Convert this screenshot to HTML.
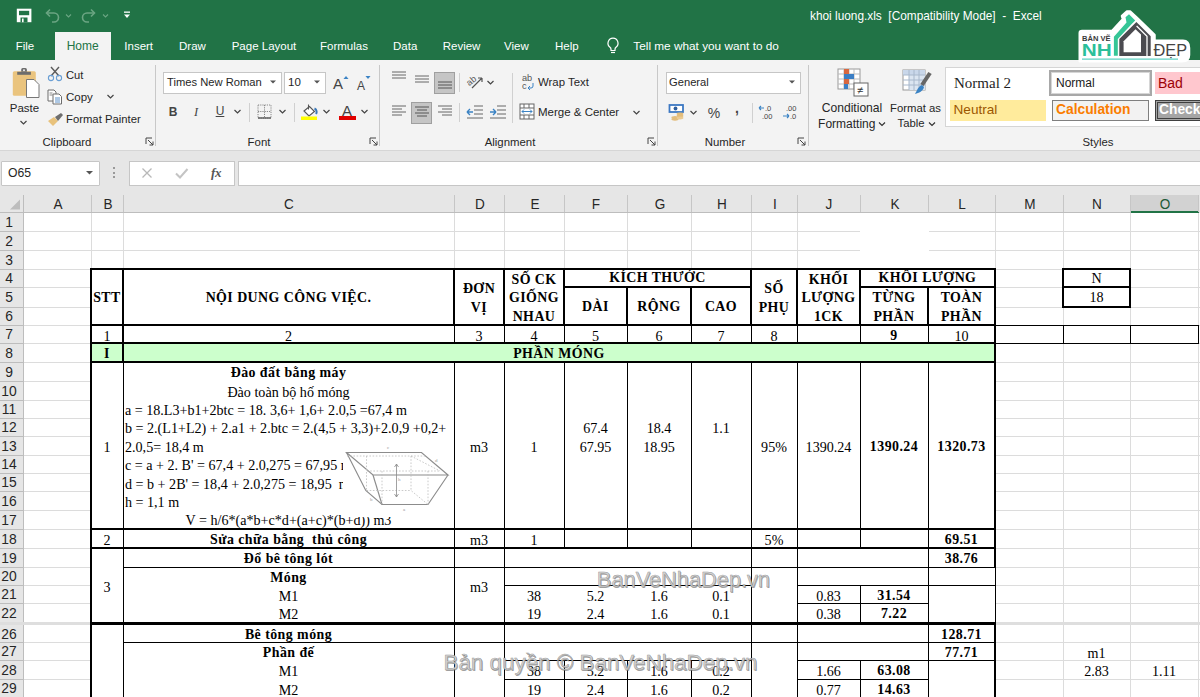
<!DOCTYPE html><html><head><meta charset="utf-8"><style>html,body{margin:0;padding:0;width:1200px;height:697px;overflow:hidden;background:#fff;position:relative;font-family:"Liberation Sans",sans-serif}</style></head><body>
<div style="position:absolute;left:0px;top:0px;width:1200px;height:60px;background:#217346;"></div>
<div style="position:absolute;left:55px;top:32px;width:56px;height:28px;background:#f3f3f3;"></div>
<svg style="position:absolute;left:16px;top:8px;" width="16" height="15" viewBox="0 0 16 15"><rect x="0.8" y="0.7" width="14.6" height="13.5" fill="#fff"/><rect x="3" y="2.8" width="10.2" height="4.4" fill="#217346"/><rect x="4.5" y="9.5" width="7" height="4.7" fill="#217346"/><rect x="6" y="10.5" width="1.6" height="3.7" fill="#fff"/></svg>
<svg style="position:absolute;left:44px;top:8px;" width="30" height="16" viewBox="0 0 30 16"><path d="M3 5h7a4.5 4.5 0 0 1 0 9h-2" fill="none" stroke="#6ba583" stroke-width="1.6"/><path d="M6 1.5L2.5 5 6 8.5" fill="none" stroke="#6ba583" stroke-width="1.6"/><path d="M22 6.5l2.5 2.5 2.5-2.5" fill="none" stroke="#6ba583" stroke-width="1.1"/></svg>
<svg style="position:absolute;left:81px;top:8px;" width="30" height="16" viewBox="0 0 30 16"><path d="M13 5H6a4.5 4.5 0 0 0 0 9h2" fill="none" stroke="#6ba583" stroke-width="1.6"/><path d="M10 1.5L13.5 5 10 8.5" fill="none" stroke="#6ba583" stroke-width="1.6"/><path d="M22 6.5l2.5 2.5 2.5-2.5" fill="none" stroke="#6ba583" stroke-width="1.1"/></svg>
<svg style="position:absolute;left:122px;top:10px;" width="10" height="10" viewBox="0 0 10 10"><rect x="2" y="1.5" width="6" height="1.3" fill="#fff"/><path d="M2 4.5h6L5 8z" fill="#fff"/></svg>
<div style="position:absolute;left:810px;top:8.50px;height:15px;line-height:15px;white-space:pre;font-family:'Liberation Sans', sans-serif;font-size:11.85px;font-weight:normal;color:#ffffff;">khoi luong.xls  [Compatibility Mode]  -  Excel</div>
<div style="position:absolute;left:15.7px;top:38.50px;height:15px;line-height:15px;white-space:pre;font-family:'Liberation Sans', sans-serif;font-size:11.5px;font-weight:normal;color:#ffffff;">File</div>
<div style="position:absolute;left:66.7px;top:38.00px;height:16px;line-height:16px;white-space:pre;font-family:'Liberation Sans', sans-serif;font-size:12px;font-weight:normal;color:#217346;">Home</div>
<div style="position:absolute;left:124.3px;top:38.50px;height:15px;line-height:15px;white-space:pre;font-family:'Liberation Sans', sans-serif;font-size:11.5px;font-weight:normal;color:#ffffff;">Insert</div>
<div style="position:absolute;left:179px;top:38.50px;height:15px;line-height:15px;white-space:pre;font-family:'Liberation Sans', sans-serif;font-size:11.5px;font-weight:normal;color:#ffffff;">Draw</div>
<div style="position:absolute;left:231.7px;top:38.50px;height:15px;line-height:15px;white-space:pre;font-family:'Liberation Sans', sans-serif;font-size:11.5px;font-weight:normal;color:#ffffff;">Page Layout</div>
<div style="position:absolute;left:320px;top:38.50px;height:15px;line-height:15px;white-space:pre;font-family:'Liberation Sans', sans-serif;font-size:11.5px;font-weight:normal;color:#ffffff;">Formulas</div>
<div style="position:absolute;left:393px;top:38.50px;height:15px;line-height:15px;white-space:pre;font-family:'Liberation Sans', sans-serif;font-size:11.5px;font-weight:normal;color:#ffffff;">Data</div>
<div style="position:absolute;left:442.7px;top:38.50px;height:15px;line-height:15px;white-space:pre;font-family:'Liberation Sans', sans-serif;font-size:11.5px;font-weight:normal;color:#ffffff;">Review</div>
<div style="position:absolute;left:504px;top:38.50px;height:15px;line-height:15px;white-space:pre;font-family:'Liberation Sans', sans-serif;font-size:11.5px;font-weight:normal;color:#ffffff;">View</div>
<div style="position:absolute;left:555px;top:38.50px;height:15px;line-height:15px;white-space:pre;font-family:'Liberation Sans', sans-serif;font-size:11.5px;font-weight:normal;color:#ffffff;">Help</div>
<svg style="position:absolute;left:606px;top:37px;" width="14" height="17" viewBox="0 0 14 17"><path d="M7 1.2a5 5 0 0 0-3 9c.6.5 1 1.2 1 2v1.3h4v-1.3c0-.8.4-1.5 1-2a5 5 0 0 0-3-9z" fill="none" stroke="#fff" stroke-width="1.2"/><path d="M5 15.5h4" stroke="#fff" stroke-width="1.2"/></svg>
<div style="position:absolute;left:633.3px;top:39.00px;height:15px;line-height:15px;white-space:pre;font-family:'Liberation Sans', sans-serif;font-size:11.8px;font-weight:normal;color:#ffffff;">Tell me what you want to do</div>
<div style="position:absolute;left:0px;top:60px;width:1200px;height:90px;background:#f3f3f3;"></div>
<div style="position:absolute;left:0px;top:150px;width:1200px;height:1px;background:#d6d6d6;"></div>
<div style="position:absolute;left:155px;top:65px;width:1px;height:81px;background:#c8c8c8;"></div>
<div style="position:absolute;left:379px;top:65px;width:1px;height:81px;background:#c8c8c8;"></div>
<div style="position:absolute;left:657px;top:65px;width:1px;height:81px;background:#c8c8c8;"></div>
<div style="position:absolute;left:808px;top:65px;width:1px;height:81px;background:#c8c8c8;"></div>
<div style="position:absolute;left:-233px;width:600px;text-align:center;top:134.50px;height:15px;line-height:15px;white-space:pre;font-family:'Liberation Sans', sans-serif;font-size:11.4px;font-weight:normal;color:#262626;">Clipboard</div>
<div style="position:absolute;left:-41px;width:600px;text-align:center;top:134.50px;height:15px;line-height:15px;white-space:pre;font-family:'Liberation Sans', sans-serif;font-size:11.4px;font-weight:normal;color:#262626;">Font</div>
<div style="position:absolute;left:210px;width:600px;text-align:center;top:134.50px;height:15px;line-height:15px;white-space:pre;font-family:'Liberation Sans', sans-serif;font-size:11.4px;font-weight:normal;color:#262626;">Alignment</div>
<div style="position:absolute;left:425px;width:600px;text-align:center;top:134.50px;height:15px;line-height:15px;white-space:pre;font-family:'Liberation Sans', sans-serif;font-size:11.4px;font-weight:normal;color:#262626;">Number</div>
<div style="position:absolute;left:798px;width:600px;text-align:center;top:134.50px;height:15px;line-height:15px;white-space:pre;font-family:'Liberation Sans', sans-serif;font-size:11.4px;font-weight:normal;color:#262626;">Styles</div>
<svg style="position:absolute;left:145px;top:137px;" width="10" height="10" viewBox="0 0 10 10"><path d="M1 1h6M1 1v6" stroke="#444" stroke-width="1"/><path d="M3 3l5 5M8 4.5v3.5h-3.5" fill="none" stroke="#444" stroke-width="1"/></svg>
<svg style="position:absolute;left:369px;top:137px;" width="10" height="10" viewBox="0 0 10 10"><path d="M1 1h6M1 1v6" stroke="#444" stroke-width="1"/><path d="M3 3l5 5M8 4.5v3.5h-3.5" fill="none" stroke="#444" stroke-width="1"/></svg>
<svg style="position:absolute;left:647px;top:137px;" width="10" height="10" viewBox="0 0 10 10"><path d="M1 1h6M1 1v6" stroke="#444" stroke-width="1"/><path d="M3 3l5 5M8 4.5v3.5h-3.5" fill="none" stroke="#444" stroke-width="1"/></svg>
<svg style="position:absolute;left:797px;top:137px;" width="10" height="10" viewBox="0 0 10 10"><path d="M1 1h6M1 1v6" stroke="#444" stroke-width="1"/><path d="M3 3l5 5M8 4.5v3.5h-3.5" fill="none" stroke="#444" stroke-width="1"/></svg>
<svg style="position:absolute;left:11px;top:67px;" width="30" height="32" viewBox="0 0 30 32"><rect x="1.8" y="4.3" width="23" height="24.4" rx="1.5" fill="#eac47e"/><rect x="6.2" y="4.8" width="13.7" height="3" fill="#6d6d6d"/><path d="M10.2 4.8v-2.2a1.5 1.5 0 0 1 1.5-1.5h2.7a1.5 1.5 0 0 1 1.5 1.5v2.2z" fill="#6d6d6d"/><circle cx="13" cy="3.2" r="1" fill="#f3f3f3"/><path d="M15.5 12.5h7.5l5 5v13h-12.5z" fill="#fff" stroke="#777" stroke-width="1"/></svg>
<div style="position:absolute;left:-275.5px;width:600px;text-align:center;top:100.50px;height:15px;line-height:15px;white-space:pre;font-family:'Liberation Sans', sans-serif;font-size:11.5px;font-weight:normal;color:#262626;">Paste</div>
<svg style="position:absolute;left:19px;top:119px;" width="10" height="8" viewBox="0 0 10 8"><path d="M1.5 2l3 3 3-3" fill="none" stroke="#444" stroke-width="1.2"/></svg>
<svg style="position:absolute;left:47px;top:66px;" width="16" height="16" viewBox="0 0 16 16"><path d="M4 1l8 9M12 1L4 10" stroke="#5a5a5a" stroke-width="1.4"/><circle cx="4" cy="12" r="2.6" fill="none" stroke="#6a9fd4" stroke-width="1.1"/><circle cx="12" cy="12" r="2.6" fill="none" stroke="#6a9fd4" stroke-width="1.1"/></svg>
<div style="position:absolute;left:66px;top:67.50px;height:15px;line-height:15px;white-space:pre;font-family:'Liberation Sans', sans-serif;font-size:11.2px;font-weight:normal;color:#262626;">Cut</div>
<svg style="position:absolute;left:47px;top:89px;" width="16" height="17" viewBox="0 0 16 17"><path d="M1 1h6l2 2v9H1z" fill="#fff" stroke="#6d6d6d" stroke-width="1"/><path d="M6 5h6l2.5 2.5V15H6z" fill="#fff" stroke="#6d6d6d" stroke-width="1"/><path d="M8 9h5M8 11h5M8 13h5" stroke="#4a86c5" stroke-width="0.9"/><path d="M2.5 4h3M2.5 6h3" stroke="#6d6d6d" stroke-width="0.8"/></svg>
<div style="position:absolute;left:66px;top:90.00px;height:15px;line-height:15px;white-space:pre;font-family:'Liberation Sans', sans-serif;font-size:11.5px;font-weight:normal;color:#262626;">Copy</div>
<svg style="position:absolute;left:106px;top:93px;" width="10" height="8" viewBox="0 0 10 8"><path d="M1.5 2l3 3 3-3" fill="none" stroke="#444" stroke-width="1.2"/></svg>
<svg style="position:absolute;left:47px;top:112px;" width="17" height="15" viewBox="0 0 17 15"><path d="M1 9l6-4 4 4-5 5z" fill="#e8c27c"/><path d="M8 5l6-4 2 2-5 6z" fill="#6d6d6d"/></svg>
<div style="position:absolute;left:66px;top:112.00px;height:15px;line-height:15px;white-space:pre;font-family:'Liberation Sans', sans-serif;font-size:11.3px;font-weight:normal;color:#262626;">Format Painter</div>
<div style="position:absolute;left:163px;top:71.5px;width:119px;height:22px;box-sizing:border-box;border:1px solid #c6c6c6;background:#fff;"></div>
<div style="position:absolute;left:167px;top:75.00px;height:15px;line-height:15px;white-space:pre;font-family:'Liberation Sans', sans-serif;font-size:11.2px;font-weight:normal;color:#262626;">Times New Roman</div>
<svg style="position:absolute;left:269px;top:79px;" width="9" height="6" viewBox="0 0 9 6"><path d="M1 1.5h6l-3 3z" fill="#555"/></svg>
<div style="position:absolute;left:284px;top:71.5px;width:42px;height:22px;box-sizing:border-box;border:1px solid #c6c6c6;background:#fff;"></div>
<div style="position:absolute;left:288px;top:75.00px;height:15px;line-height:15px;white-space:pre;font-family:'Liberation Sans', sans-serif;font-size:11.5px;font-weight:normal;color:#262626;">10</div>
<svg style="position:absolute;left:313px;top:79px;" width="9" height="6" viewBox="0 0 9 6"><path d="M1 1.5h6l-3 3z" fill="#555"/></svg>
<div style="position:absolute;left:333px;top:74.00px;height:20px;line-height:20px;white-space:pre;font-family:'Liberation Sans', sans-serif;font-size:15px;font-weight:normal;color:#444;">A</div>
<svg style="position:absolute;left:343px;top:75px;" width="6" height="5" viewBox="0 0 6 5"><path d="M0.5 4L3 1l2.5 3z" fill="#3b83c4"/></svg>
<div style="position:absolute;left:357px;top:78.00px;height:16px;line-height:16px;white-space:pre;font-family:'Liberation Sans', sans-serif;font-size:12px;font-weight:normal;color:#444;">A</div>
<svg style="position:absolute;left:365px;top:75px;" width="6" height="5" viewBox="0 0 6 5"><path d="M0.5 1L3 4l2.5-3z" fill="#3b83c4"/></svg>
<div style="position:absolute;left:-127px;width:600px;text-align:center;top:104.00px;height:16px;line-height:16px;white-space:pre;font-family:'Liberation Sans', sans-serif;font-size:12px;font-weight:bold;color:#444;">B</div>
<div style="position:absolute;left:-104px;width:600px;text-align:center;top:104.00px;height:16px;line-height:16px;white-space:pre;font-family:'Liberation Serif', serif;font-size:12.5px;font-weight:normal;color:#444;font-style:italic;">I</div>
<div style="position:absolute;left:-80px;width:600px;text-align:center;top:103.00px;height:16px;line-height:16px;white-space:pre;font-family:'Liberation Sans', sans-serif;font-size:12px;font-weight:normal;color:#444;text-decoration:underline;">U</div>
<svg style="position:absolute;left:233px;top:108px;" width="10" height="8" viewBox="0 0 10 8"><path d="M1.5 2l3 3 3-3" fill="none" stroke="#444" stroke-width="1.2"/></svg>
<div style="position:absolute;left:249px;top:103px;width:1px;height:19px;background:#d0d0d0;"></div>
<svg style="position:absolute;left:257px;top:104px;" width="15" height="15" viewBox="0 0 15 15"><path d="M1 1h13v13H1zM7.5 1v13M1 7.5h13" fill="none" stroke="#888" stroke-width="1" stroke-dasharray="1.2 1"/><path d="M1 14h13" stroke="#444" stroke-width="1.2"/></svg>
<svg style="position:absolute;left:278px;top:108px;" width="10" height="8" viewBox="0 0 10 8"><path d="M1.5 2l3 3 3-3" fill="none" stroke="#444" stroke-width="1.2"/></svg>
<div style="position:absolute;left:294px;top:103px;width:1px;height:19px;background:#d0d0d0;"></div>
<svg style="position:absolute;left:300px;top:103px;" width="19" height="19" viewBox="0 0 19 19"><path d="M4 8l5.5-4.5 5 5-5.5 4.5z" fill="#fff" stroke="#555" stroke-width="1.1"/><path d="M8.5 1.5v5" stroke="#555" stroke-width="1.1"/><path d="M14.5 5.5c2.5 1 2.5 4 1.5 5.5" fill="none" stroke="#3b78b8" stroke-width="2"/><rect x="1" y="13.5" width="16" height="3.5" fill="#ffff00"/></svg>
<svg style="position:absolute;left:322px;top:108px;" width="10" height="8" viewBox="0 0 10 8"><path d="M1.5 2l3 3 3-3" fill="none" stroke="#444" stroke-width="1.2"/></svg>
<div style="position:absolute;left:47px;width:600px;text-align:center;top:101.00px;height:20px;line-height:20px;white-space:pre;font-family:'Liberation Sans', sans-serif;font-size:15px;font-weight:normal;color:#444;">A</div>
<div style="position:absolute;left:339px;top:116.3px;width:16.5px;height:3.5px;background:#e00000;"></div>
<svg style="position:absolute;left:360px;top:108px;" width="10" height="8" viewBox="0 0 10 8"><path d="M1.5 2l3 3 3-3" fill="none" stroke="#444" stroke-width="1.2"/></svg>
<svg style="position:absolute;left:391px;top:71px;" width="16" height="12" viewBox="0 0 16 12"><path d="M1 1h14" stroke="#666" stroke-width="1"/><path d="M1 4h14" stroke="#666" stroke-width="1"/><path d="M1 7h14" stroke="#666" stroke-width="1"/></svg>
<svg style="position:absolute;left:414px;top:75px;" width="16" height="12" viewBox="0 0 16 12"><path d="M1 1h14" stroke="#666" stroke-width="1"/><path d="M1 4h14" stroke="#666" stroke-width="1"/><path d="M1 7h14" stroke="#666" stroke-width="1"/></svg>
<div style="position:absolute;left:434px;top:71.5px;width:21px;height:22px;box-sizing:border-box;border:1px solid #9f9f9f;background:#c5c5c5;"></div>
<svg style="position:absolute;left:437px;top:81px;" width="16" height="12" viewBox="0 0 16 12"><path d="M1 1h14" stroke="#555" stroke-width="1"/><path d="M1 4h14" stroke="#555" stroke-width="1"/><path d="M1 7h14" stroke="#555" stroke-width="1"/></svg>
<div style="position:absolute;left:459px;top:73px;width:1px;height:19px;background:#d0d0d0;"></div>
<svg style="position:absolute;left:465px;top:72px;" width="20" height="20" viewBox="0 0 20 20"><text x="1" y="11" font-size="9" font-family="Liberation Sans" fill="#555" transform="rotate(-40 7 8)">ab</text><path d="M7 16L17 6M17 6h-4M17 6v4" fill="none" stroke="#555" stroke-width="1.2"/></svg>
<svg style="position:absolute;left:486px;top:79px;" width="10" height="8" viewBox="0 0 10 8"><path d="M1.5 2l3 3 3-3" fill="none" stroke="#444" stroke-width="1.2"/></svg>
<div style="position:absolute;left:512px;top:73px;width:1px;height:50px;background:#d0d0d0;"></div>
<div style="position:absolute;left:522px;top:72.00px;height:12px;line-height:12px;white-space:pre;font-family:'Liberation Sans', sans-serif;font-size:9.2px;font-weight:normal;color:#555;">ab</div>
<div style="position:absolute;left:522px;top:79.50px;height:12px;line-height:12px;white-space:pre;font-family:'Liberation Sans', sans-serif;font-size:9.2px;font-weight:normal;color:#555;">c</div>
<svg style="position:absolute;left:527px;top:82px;" width="8" height="8" viewBox="0 0 8 8"><path d="M6 1v3a2 2 0 0 1-2 2H1M3 4L1 6l2 2" fill="none" stroke="#3b83c4" stroke-width="1"/></svg>
<div style="position:absolute;left:538px;top:75.00px;height:15px;line-height:15px;white-space:pre;font-family:'Liberation Sans', sans-serif;font-size:11.4px;font-weight:normal;color:#262626;">Wrap Text</div>
<svg style="position:absolute;left:391px;top:105px;" width="16" height="14" viewBox="0 0 16 14"><path d="M1 1h14" stroke="#666" stroke-width="1"/><path d="M1 4h10" stroke="#666" stroke-width="1"/><path d="M1 7h14" stroke="#666" stroke-width="1"/><path d="M1 10h10" stroke="#666" stroke-width="1"/></svg>
<div style="position:absolute;left:411px;top:101.5px;width:21px;height:22px;box-sizing:border-box;border:1px solid #9f9f9f;background:#c5c5c5;"></div>
<svg style="position:absolute;left:414px;top:106px;" width="16" height="14" viewBox="0 0 16 14"><path d="M1 1h14" stroke="#555" stroke-width="1"/><path d="M3 4h10" stroke="#555" stroke-width="1"/><path d="M1 7h14" stroke="#555" stroke-width="1"/><path d="M3 10h10" stroke="#555" stroke-width="1"/></svg>
<svg style="position:absolute;left:437px;top:105px;" width="16" height="14" viewBox="0 0 16 14"><path d="M1 1h14" stroke="#666" stroke-width="1"/><path d="M5 4h10" stroke="#666" stroke-width="1"/><path d="M1 7h14" stroke="#666" stroke-width="1"/><path d="M5 10h10" stroke="#666" stroke-width="1"/></svg>
<div style="position:absolute;left:459px;top:103px;width:1px;height:19px;background:#d0d0d0;"></div>
<svg style="position:absolute;left:466px;top:104px;" width="18" height="16" viewBox="0 0 18 16"><path d="M8 2h9M8 6h9M8 10h9M1 14h16" stroke="#666" stroke-width="1"/><path d="M1 8h6M1 8l3-3M1 8l3 3" fill="none" stroke="#3b83c4" stroke-width="1.4"/></svg>
<svg style="position:absolute;left:489px;top:104px;" width="18" height="16" viewBox="0 0 18 16"><path d="M8 2h9M8 6h9M8 10h9M1 14h16" stroke="#666" stroke-width="1"/><path d="M1 8h6M7 8l-3-3M7 8l-3 3" fill="none" stroke="#3b83c4" stroke-width="1.4"/></svg>
<svg style="position:absolute;left:519px;top:103px;" width="16" height="17" viewBox="0 0 16 17"><rect x="1" y="1" width="14" height="15" fill="#fff" stroke="#666" stroke-width="1"/><path d="M1 5h14M1 12h14M5 1v4M10 1v4M5 12v4M10 12v4" stroke="#666" stroke-width="1"/><path d="M3 8.5h10M3 8.5l2-2M3 8.5l2 2M13 8.5l-2-2M13 8.5l-2 2" fill="none" stroke="#3b83c4" stroke-width="1"/></svg>
<div style="position:absolute;left:538px;top:105.00px;height:15px;line-height:15px;white-space:pre;font-family:'Liberation Sans', sans-serif;font-size:11.5px;font-weight:normal;color:#262626;">Merge &amp; Center</div>
<svg style="position:absolute;left:632px;top:109px;" width="10" height="8" viewBox="0 0 10 8"><path d="M1.5 2l3 3 3-3" fill="none" stroke="#444" stroke-width="1.2"/></svg>
<div style="position:absolute;left:666px;top:71.5px;width:135px;height:22px;box-sizing:border-box;border:1px solid #c6c6c6;background:#fff;"></div>
<div style="position:absolute;left:669px;top:75.00px;height:15px;line-height:15px;white-space:pre;font-family:'Liberation Sans', sans-serif;font-size:11.2px;font-weight:normal;color:#262626;">General</div>
<svg style="position:absolute;left:788px;top:79px;" width="9" height="6" viewBox="0 0 9 6"><path d="M1 1.5h6l-3 3z" fill="#555"/></svg>
<svg style="position:absolute;left:667px;top:103px;" width="19" height="18" viewBox="0 0 19 18"><rect x="2.5" y="2" width="13.5" height="7" fill="#fff" stroke="#3c78c3" stroke-width="1.8"/><circle cx="8.5" cy="5.5" r="1.9" fill="#2f5f9e"/><ellipse cx="8" cy="14.5" rx="3.6" ry="1.5" fill="#e3bd7c"/><ellipse cx="8" cy="16.3" rx="3.6" ry="1.4" fill="#e3bd7c"/><ellipse cx="13" cy="11" rx="3.4" ry="1.4" fill="#e3bd7c"/><ellipse cx="13" cy="13" rx="3.4" ry="1.4" fill="#e3bd7c"/><ellipse cx="13" cy="15" rx="3.4" ry="1.4" fill="#eccb92"/></svg>
<svg style="position:absolute;left:689px;top:109px;" width="10" height="8" viewBox="0 0 10 8"><path d="M1.5 2l3 3 3-3" fill="none" stroke="#444" stroke-width="1.2"/></svg>
<div style="position:absolute;left:414px;width:600px;text-align:center;top:103.50px;height:18px;line-height:18px;white-space:pre;font-family:'Liberation Sans', sans-serif;font-size:14px;font-weight:normal;color:#444;">%</div>
<div style="position:absolute;left:437px;width:600px;text-align:center;top:98.50px;height:18px;line-height:18px;white-space:pre;font-family:'Liberation Sans', sans-serif;font-size:14px;font-weight:bold;color:#444;">,</div>
<div style="position:absolute;left:752px;top:103px;width:1px;height:20px;background:#d0d0d0;"></div>
<svg style="position:absolute;left:758px;top:104px;" width="17" height="16" viewBox="0 0 17 16"><path d="M6 4H1M1 4l2-2M1 4l2 2" fill="none" stroke="#3b83c4" stroke-width="1.1"/><text x="7" y="7" font-size="7.5" font-family="Liberation Sans" fill="#444">.0</text><text x="4" y="15" font-size="7.5" font-family="Liberation Sans" fill="#444">.00</text></svg>
<svg style="position:absolute;left:782px;top:104px;" width="17" height="16" viewBox="0 0 17 16"><text x="4" y="7" font-size="7.5" font-family="Liberation Sans" fill="#444">.00</text><path d="M1 12h6M7 12l-2-2M7 12l-2 2" fill="none" stroke="#3b83c4" stroke-width="1.1"/><text x="8" y="15" font-size="7.5" font-family="Liberation Sans" fill="#444">.0</text></svg>
<svg style="position:absolute;left:837px;top:68px;" width="32" height="30" viewBox="0 0 32 30"><rect x="1" y="1" width="22" height="20" fill="#fff" stroke="#999" stroke-width="1"/><path d="M1 6h22M1 11h22M1 16h22M7 1v20M12 1v20M17 1v20" stroke="#bbb" stroke-width="1"/><rect x="7" y="1" width="5" height="5" fill="#d9673e"/><rect x="7" y="6" width="10" height="5" fill="#3b7ec4"/><rect x="7" y="11" width="5" height="5" fill="#d9673e"/><rect x="7" y="16" width="4" height="5" fill="#3b7ec4"/><rect x="17" y="15" width="14" height="13" fill="#fff" stroke="#666" stroke-width="1"/><text x="20" y="26" font-size="11" font-family="Liberation Sans" fill="#333">≠</text></svg>
<div style="position:absolute;left:552px;width:600px;text-align:center;top:100.00px;height:16px;line-height:16px;white-space:pre;font-family:'Liberation Sans', sans-serif;font-size:12.1px;font-weight:normal;color:#262626;">Conditional</div>
<div style="position:absolute;left:546.8px;width:600px;text-align:center;top:115.50px;height:16px;line-height:16px;white-space:pre;font-family:'Liberation Sans', sans-serif;font-size:12.0px;font-weight:normal;color:#262626;">Formatting</div>
<svg style="position:absolute;left:877.5px;top:121px;" width="8" height="6" viewBox="0 0 8 6"><path d="M1 1.5l3 3 3-3" fill="none" stroke="#333" stroke-width="1.2"/></svg>
<svg style="position:absolute;left:902px;top:69px;" width="30" height="28" viewBox="0 0 30 28"><rect x="1" y="1" width="22" height="20" fill="#fff" stroke="#999" stroke-width="1"/><rect x="1" y="1" width="22" height="5" fill="#c9d7ea"/><rect x="7" y="6" width="16" height="15" fill="#dbe5f1"/><path d="M1 6h22M1 11h22M1 16h22M7 1v20M12 1v20M17 1v20" stroke="#a8b8cc" stroke-width="1"/><path d="M28 4l-8 12" stroke="#666" stroke-width="4"/><path d="M20 16c-3 1-4 3-7 9c4-1 8-3 9-7z" fill="#3b83c4"/></svg>
<div style="position:absolute;left:615.5px;width:600px;text-align:center;top:100.50px;height:15px;line-height:15px;white-space:pre;font-family:'Liberation Sans', sans-serif;font-size:11.3px;font-weight:normal;color:#262626;">Format as</div>
<div style="position:absolute;left:611px;width:600px;text-align:center;top:116.00px;height:15px;line-height:15px;white-space:pre;font-family:'Liberation Sans', sans-serif;font-size:11.3px;font-weight:normal;color:#262626;">Table</div>
<svg style="position:absolute;left:927.5px;top:121px;" width="8" height="6" viewBox="0 0 8 6"><path d="M1 1.5l3 3 3-3" fill="none" stroke="#333" stroke-width="1.2"/></svg>
<div style="position:absolute;left:945px;top:67px;width:260px;height:60px;box-sizing:border-box;border:1px solid #d5d5d5;background:#ffffff;"></div>
<div style="position:absolute;left:954px;top:73.00px;height:20px;line-height:20px;white-space:pre;font-family:'Liberation Serif', serif;font-size:15px;font-weight:normal;color:#1f1f1f;">Normal 2</div>
<div style="position:absolute;left:1049px;top:70px;width:103px;height:26px;box-sizing:border-box;border:2px solid #a8a8a8;background:#fff;box-shadow:inset 0 0 0 1px #d6d6d6;"></div>
<div style="position:absolute;left:1056px;top:75.00px;height:16px;line-height:16px;white-space:pre;font-family:'Liberation Sans', sans-serif;font-size:12px;font-weight:normal;color:#1a1a1a;">Normal</div>
<div style="position:absolute;left:1155px;top:72px;width:50px;height:22px;background:#ffc7ce;"></div>
<div style="position:absolute;left:1158px;top:74.00px;height:18px;line-height:18px;white-space:pre;font-family:'Liberation Sans', sans-serif;font-size:14px;font-weight:normal;color:#9c0006;">Bad</div>
<div style="position:absolute;left:950px;top:99.5px;width:96px;height:21px;background:#ffeb9c;"></div>
<div style="position:absolute;left:953.5px;top:101.00px;height:18px;line-height:18px;white-space:pre;font-family:'Liberation Sans', sans-serif;font-size:13.6px;font-weight:normal;color:#9c5700;">Neutral</div>
<div style="position:absolute;left:1052px;top:99.5px;width:97px;height:21px;box-sizing:border-box;border:1px solid #7f7f7f;background:#f2f2f2;"></div>
<div style="position:absolute;left:1056px;top:101.00px;height:18px;line-height:18px;white-space:pre;font-family:'Liberation Sans', sans-serif;font-size:13.8px;font-weight:bold;color:#fa7d00;">Calculation</div>
<div style="position:absolute;left:1155px;top:99.5px;width:50px;height:21px;box-sizing:border-box;border:3px double #3f3f3f;background:#a5a5a5;"></div>
<div style="position:absolute;left:1159px;top:101.00px;height:18px;line-height:18px;white-space:pre;font-family:'Liberation Sans', sans-serif;font-size:13.8px;font-weight:bold;color:#ffffff;">Check</div>
<div style="position:absolute;left:0px;top:151px;width:1200px;height:62px;background:#e6e6e6;"></div>
<div style="position:absolute;left:1px;top:160.5px;width:99px;height:25px;box-sizing:border-box;border:1px solid #c6c6c6;background:#fff;border-radius:1px;"></div>
<div style="position:absolute;left:8px;top:165.00px;height:16px;line-height:16px;white-space:pre;font-family:'Liberation Sans', sans-serif;font-size:12.2px;font-weight:normal;color:#262626;">O65</div>
<svg style="position:absolute;left:85px;top:170px;" width="10" height="6" viewBox="0 0 10 6"><path d="M1 1h7l-3.5 3.5z" fill="#555"/></svg>
<div style="position:absolute;left:113px;top:167px;width:2px;height:2px;background:#999;"></div>
<div style="position:absolute;left:113px;top:171.5px;width:2px;height:2px;background:#999;"></div>
<div style="position:absolute;left:113px;top:176px;width:2px;height:2px;background:#999;"></div>
<div style="position:absolute;left:129px;top:160.5px;width:106px;height:25px;box-sizing:border-box;border:1px solid #c6c6c6;background:#fff;"></div>
<svg style="position:absolute;left:141px;top:167px;" width="12" height="12" viewBox="0 0 12 12"><path d="M1.5 1.5l9 9M10.5 1.5l-9 9" stroke="#b8b8b8" stroke-width="1.3"/></svg>
<svg style="position:absolute;left:175px;top:167px;" width="14" height="12" viewBox="0 0 14 12"><path d="M1 6.5l4 4 7.5-8.5" fill="none" stroke="#c4c4c4" stroke-width="2"/></svg>
<div style="position:absolute;left:-84px;width:600px;text-align:center;top:164.00px;height:17px;line-height:17px;white-space:pre;font-family:'Liberation Serif', serif;font-size:13px;font-weight:bold;color:#555;font-style:italic;letter-spacing:-0.5px;">fx</div>
<div style="position:absolute;left:238px;top:160.5px;width:970px;height:25px;box-sizing:border-box;border:1px solid #c6c6c6;background:#fff;"></div>
<div style="position:absolute;left:0px;top:213px;width:23px;height:484px;background:#e6e6e6;"></div>
<div style="position:absolute;left:24px;top:214px;width:1176px;height:483px;background:#ffffff;"></div>
<div style="position:absolute;left:1131px;top:195px;width:68px;height:18px;background:#d2d2d2;"></div>
<div style="position:absolute;left:1131px;top:211px;width:68px;height:2px;background:#217346;"></div>
<svg style="position:absolute;left:9px;top:198px;" width="13" height="13" viewBox="0 0 13 13"><path d="M11 1.5v10H1z" fill="#bdbdbd"/></svg>
<div style="position:absolute;left:0px;top:212px;width:1131px;height:1px;background:#bdbdbd;"></div>
<div style="position:absolute;left:23px;top:195px;width:1px;height:502px;background:#bdbdbd;"></div>
<div style="position:absolute;left:91px;top:195px;width:1px;height:17px;background:#c6c6c6;"></div>
<div style="position:absolute;left:123px;top:195px;width:1px;height:17px;background:#c6c6c6;"></div>
<div style="position:absolute;left:454px;top:195px;width:1px;height:17px;background:#c6c6c6;"></div>
<div style="position:absolute;left:504px;top:195px;width:1px;height:17px;background:#c6c6c6;"></div>
<div style="position:absolute;left:564px;top:195px;width:1px;height:17px;background:#c6c6c6;"></div>
<div style="position:absolute;left:627px;top:195px;width:1px;height:17px;background:#c6c6c6;"></div>
<div style="position:absolute;left:691px;top:195px;width:1px;height:17px;background:#c6c6c6;"></div>
<div style="position:absolute;left:751px;top:195px;width:1px;height:17px;background:#c6c6c6;"></div>
<div style="position:absolute;left:797px;top:195px;width:1px;height:17px;background:#c6c6c6;"></div>
<div style="position:absolute;left:860px;top:195px;width:1px;height:17px;background:#c6c6c6;"></div>
<div style="position:absolute;left:928px;top:195px;width:1px;height:17px;background:#c6c6c6;"></div>
<div style="position:absolute;left:995px;top:195px;width:1px;height:17px;background:#c6c6c6;"></div>
<div style="position:absolute;left:1063px;top:195px;width:1px;height:17px;background:#c6c6c6;"></div>
<div style="position:absolute;left:1130px;top:195px;width:1px;height:17px;background:#c6c6c6;"></div>
<div style="position:absolute;left:1198px;top:195px;width:1px;height:17px;background:#c6c6c6;"></div>
<div style="position:absolute;left:-242.5px;width:600px;text-align:center;top:195.00px;height:19px;line-height:19px;white-space:pre;font-family:'Liberation Sans', sans-serif;font-size:14.6px;font-weight:normal;color:#262626;transform:scaleX(0.93);">A</div>
<div style="position:absolute;left:-192.5px;width:600px;text-align:center;top:195.00px;height:19px;line-height:19px;white-space:pre;font-family:'Liberation Sans', sans-serif;font-size:14.6px;font-weight:normal;color:#262626;transform:scaleX(0.93);">B</div>
<div style="position:absolute;left:-11.0px;width:600px;text-align:center;top:195.00px;height:19px;line-height:19px;white-space:pre;font-family:'Liberation Sans', sans-serif;font-size:14.6px;font-weight:normal;color:#262626;transform:scaleX(0.93);">C</div>
<div style="position:absolute;left:179.5px;width:600px;text-align:center;top:195.00px;height:19px;line-height:19px;white-space:pre;font-family:'Liberation Sans', sans-serif;font-size:14.6px;font-weight:normal;color:#262626;transform:scaleX(0.93);">D</div>
<div style="position:absolute;left:234.5px;width:600px;text-align:center;top:195.00px;height:19px;line-height:19px;white-space:pre;font-family:'Liberation Sans', sans-serif;font-size:14.6px;font-weight:normal;color:#262626;transform:scaleX(0.93);">E</div>
<div style="position:absolute;left:296.0px;width:600px;text-align:center;top:195.00px;height:19px;line-height:19px;white-space:pre;font-family:'Liberation Sans', sans-serif;font-size:14.6px;font-weight:normal;color:#262626;transform:scaleX(0.93);">F</div>
<div style="position:absolute;left:359.5px;width:600px;text-align:center;top:195.00px;height:19px;line-height:19px;white-space:pre;font-family:'Liberation Sans', sans-serif;font-size:14.6px;font-weight:normal;color:#262626;transform:scaleX(0.93);">G</div>
<div style="position:absolute;left:421.5px;width:600px;text-align:center;top:195.00px;height:19px;line-height:19px;white-space:pre;font-family:'Liberation Sans', sans-serif;font-size:14.6px;font-weight:normal;color:#262626;transform:scaleX(0.93);">H</div>
<div style="position:absolute;left:474.5px;width:600px;text-align:center;top:195.00px;height:19px;line-height:19px;white-space:pre;font-family:'Liberation Sans', sans-serif;font-size:14.6px;font-weight:normal;color:#262626;transform:scaleX(0.93);">I</div>
<div style="position:absolute;left:529.0px;width:600px;text-align:center;top:195.00px;height:19px;line-height:19px;white-space:pre;font-family:'Liberation Sans', sans-serif;font-size:14.6px;font-weight:normal;color:#262626;transform:scaleX(0.93);">J</div>
<div style="position:absolute;left:594.5px;width:600px;text-align:center;top:195.00px;height:19px;line-height:19px;white-space:pre;font-family:'Liberation Sans', sans-serif;font-size:14.6px;font-weight:normal;color:#262626;transform:scaleX(0.93);">K</div>
<div style="position:absolute;left:662.0px;width:600px;text-align:center;top:195.00px;height:19px;line-height:19px;white-space:pre;font-family:'Liberation Sans', sans-serif;font-size:14.6px;font-weight:normal;color:#262626;transform:scaleX(0.93);">L</div>
<div style="position:absolute;left:729.5px;width:600px;text-align:center;top:195.00px;height:19px;line-height:19px;white-space:pre;font-family:'Liberation Sans', sans-serif;font-size:14.6px;font-weight:normal;color:#262626;transform:scaleX(0.93);">M</div>
<div style="position:absolute;left:797.0px;width:600px;text-align:center;top:195.00px;height:19px;line-height:19px;white-space:pre;font-family:'Liberation Sans', sans-serif;font-size:14.6px;font-weight:normal;color:#262626;transform:scaleX(0.93);">N</div>
<div style="position:absolute;left:864.5px;width:600px;text-align:center;top:195.00px;height:19px;line-height:19px;white-space:pre;font-family:'Liberation Sans', sans-serif;font-size:14.6px;font-weight:normal;color:#1e5a37;transform:scaleX(0.93);">O</div>
<div style="position:absolute;left:91px;top:213px;width:1px;height:484px;background:#dcdcdc;"></div>
<div style="position:absolute;left:123px;top:213px;width:1px;height:484px;background:#dcdcdc;"></div>
<div style="position:absolute;left:454px;top:213px;width:1px;height:484px;background:#dcdcdc;"></div>
<div style="position:absolute;left:504px;top:213px;width:1px;height:484px;background:#dcdcdc;"></div>
<div style="position:absolute;left:564px;top:213px;width:1px;height:484px;background:#dcdcdc;"></div>
<div style="position:absolute;left:627px;top:213px;width:1px;height:484px;background:#dcdcdc;"></div>
<div style="position:absolute;left:691px;top:213px;width:1px;height:484px;background:#dcdcdc;"></div>
<div style="position:absolute;left:751px;top:213px;width:1px;height:484px;background:#dcdcdc;"></div>
<div style="position:absolute;left:797px;top:213px;width:1px;height:484px;background:#dcdcdc;"></div>
<div style="position:absolute;left:860px;top:213px;width:1px;height:484px;background:#dcdcdc;"></div>
<div style="position:absolute;left:928px;top:213px;width:1px;height:484px;background:#dcdcdc;"></div>
<div style="position:absolute;left:995px;top:213px;width:1px;height:484px;background:#dcdcdc;"></div>
<div style="position:absolute;left:1063px;top:213px;width:1px;height:484px;background:#dcdcdc;"></div>
<div style="position:absolute;left:1130px;top:213px;width:1px;height:484px;background:#dcdcdc;"></div>
<div style="position:absolute;left:1198px;top:213px;width:1px;height:484px;background:#dcdcdc;"></div>
<div style="position:absolute;left:0px;top:231px;width:23px;height:1px;background:#bdbdbd;"></div>
<div style="position:absolute;left:24px;top:231px;width:1176px;height:1px;background:#dcdcdc;"></div>
<div style="position:absolute;left:0px;top:250px;width:23px;height:1px;background:#bdbdbd;"></div>
<div style="position:absolute;left:24px;top:250px;width:1176px;height:1px;background:#dcdcdc;"></div>
<div style="position:absolute;left:0px;top:269px;width:23px;height:1px;background:#bdbdbd;"></div>
<div style="position:absolute;left:24px;top:269px;width:1176px;height:1px;background:#dcdcdc;"></div>
<div style="position:absolute;left:0px;top:287px;width:23px;height:1px;background:#bdbdbd;"></div>
<div style="position:absolute;left:24px;top:287px;width:1176px;height:1px;background:#dcdcdc;"></div>
<div style="position:absolute;left:0px;top:307px;width:23px;height:1px;background:#bdbdbd;"></div>
<div style="position:absolute;left:24px;top:307px;width:1176px;height:1px;background:#dcdcdc;"></div>
<div style="position:absolute;left:0px;top:325px;width:23px;height:1px;background:#bdbdbd;"></div>
<div style="position:absolute;left:24px;top:325px;width:1176px;height:1px;background:#dcdcdc;"></div>
<div style="position:absolute;left:0px;top:343px;width:23px;height:1px;background:#bdbdbd;"></div>
<div style="position:absolute;left:24px;top:343px;width:1176px;height:1px;background:#dcdcdc;"></div>
<div style="position:absolute;left:0px;top:362px;width:23px;height:1px;background:#bdbdbd;"></div>
<div style="position:absolute;left:24px;top:362px;width:1176px;height:1px;background:#dcdcdc;"></div>
<div style="position:absolute;left:0px;top:381px;width:23px;height:1px;background:#bdbdbd;"></div>
<div style="position:absolute;left:24px;top:381px;width:1176px;height:1px;background:#dcdcdc;"></div>
<div style="position:absolute;left:0px;top:400px;width:23px;height:1px;background:#bdbdbd;"></div>
<div style="position:absolute;left:24px;top:400px;width:1176px;height:1px;background:#dcdcdc;"></div>
<div style="position:absolute;left:0px;top:418px;width:23px;height:1px;background:#bdbdbd;"></div>
<div style="position:absolute;left:24px;top:418px;width:1176px;height:1px;background:#dcdcdc;"></div>
<div style="position:absolute;left:0px;top:436px;width:23px;height:1px;background:#bdbdbd;"></div>
<div style="position:absolute;left:24px;top:436px;width:1176px;height:1px;background:#dcdcdc;"></div>
<div style="position:absolute;left:0px;top:455px;width:23px;height:1px;background:#bdbdbd;"></div>
<div style="position:absolute;left:24px;top:455px;width:1176px;height:1px;background:#dcdcdc;"></div>
<div style="position:absolute;left:0px;top:473px;width:23px;height:1px;background:#bdbdbd;"></div>
<div style="position:absolute;left:24px;top:473px;width:1176px;height:1px;background:#dcdcdc;"></div>
<div style="position:absolute;left:0px;top:491px;width:23px;height:1px;background:#bdbdbd;"></div>
<div style="position:absolute;left:24px;top:491px;width:1176px;height:1px;background:#dcdcdc;"></div>
<div style="position:absolute;left:0px;top:510px;width:23px;height:1px;background:#bdbdbd;"></div>
<div style="position:absolute;left:24px;top:510px;width:1176px;height:1px;background:#dcdcdc;"></div>
<div style="position:absolute;left:0px;top:529px;width:23px;height:1px;background:#bdbdbd;"></div>
<div style="position:absolute;left:24px;top:529px;width:1176px;height:1px;background:#dcdcdc;"></div>
<div style="position:absolute;left:0px;top:548px;width:23px;height:1px;background:#bdbdbd;"></div>
<div style="position:absolute;left:24px;top:548px;width:1176px;height:1px;background:#dcdcdc;"></div>
<div style="position:absolute;left:0px;top:567px;width:23px;height:1px;background:#bdbdbd;"></div>
<div style="position:absolute;left:24px;top:567px;width:1176px;height:1px;background:#dcdcdc;"></div>
<div style="position:absolute;left:0px;top:585px;width:23px;height:1px;background:#bdbdbd;"></div>
<div style="position:absolute;left:24px;top:585px;width:1176px;height:1px;background:#dcdcdc;"></div>
<div style="position:absolute;left:0px;top:603px;width:23px;height:1px;background:#bdbdbd;"></div>
<div style="position:absolute;left:24px;top:603px;width:1176px;height:1px;background:#dcdcdc;"></div>
<div style="position:absolute;left:0px;top:622px;width:23px;height:1px;background:#bdbdbd;"></div>
<div style="position:absolute;left:24px;top:622px;width:1176px;height:1px;background:#dcdcdc;"></div>
<div style="position:absolute;left:0px;top:642px;width:23px;height:1px;background:#bdbdbd;"></div>
<div style="position:absolute;left:24px;top:642px;width:1176px;height:1px;background:#dcdcdc;"></div>
<div style="position:absolute;left:0px;top:660px;width:23px;height:1px;background:#bdbdbd;"></div>
<div style="position:absolute;left:24px;top:660px;width:1176px;height:1px;background:#dcdcdc;"></div>
<div style="position:absolute;left:0px;top:679px;width:23px;height:1px;background:#bdbdbd;"></div>
<div style="position:absolute;left:24px;top:679px;width:1176px;height:1px;background:#dcdcdc;"></div>
<div style="position:absolute;left:0px;top:697px;width:23px;height:1px;background:#bdbdbd;"></div>
<div style="position:absolute;left:24px;top:697px;width:1176px;height:1px;background:#dcdcdc;"></div>
<div style="position:absolute;left:860px;top:213px;width:69px;height:56px;background:#fff;"></div>
<div style="position:absolute;left:0px;top:622px;width:1200px;height:3px;background:#dedede;"></div>
<div style="position:absolute;left:-290.7px;width:600px;text-align:center;top:213.00px;height:19px;line-height:19px;white-space:pre;font-family:'Liberation Sans', sans-serif;font-size:14.6px;font-weight:normal;color:#262626;transform:scaleX(0.95);">1</div>
<div style="position:absolute;left:-290.7px;width:600px;text-align:center;top:231.50px;height:19px;line-height:19px;white-space:pre;font-family:'Liberation Sans', sans-serif;font-size:14.6px;font-weight:normal;color:#262626;transform:scaleX(0.95);">2</div>
<div style="position:absolute;left:-290.7px;width:600px;text-align:center;top:250.50px;height:19px;line-height:19px;white-space:pre;font-family:'Liberation Sans', sans-serif;font-size:14.6px;font-weight:normal;color:#262626;transform:scaleX(0.95);">3</div>
<div style="position:absolute;left:-290.7px;width:600px;text-align:center;top:269.00px;height:19px;line-height:19px;white-space:pre;font-family:'Liberation Sans', sans-serif;font-size:14.6px;font-weight:normal;color:#262626;transform:scaleX(0.95);">4</div>
<div style="position:absolute;left:-290.7px;width:600px;text-align:center;top:288.00px;height:19px;line-height:19px;white-space:pre;font-family:'Liberation Sans', sans-serif;font-size:14.6px;font-weight:normal;color:#262626;transform:scaleX(0.95);">5</div>
<div style="position:absolute;left:-290.7px;width:600px;text-align:center;top:307.00px;height:19px;line-height:19px;white-space:pre;font-family:'Liberation Sans', sans-serif;font-size:14.6px;font-weight:normal;color:#262626;transform:scaleX(0.95);">6</div>
<div style="position:absolute;left:-290.7px;width:600px;text-align:center;top:325.00px;height:19px;line-height:19px;white-space:pre;font-family:'Liberation Sans', sans-serif;font-size:14.6px;font-weight:normal;color:#262626;transform:scaleX(0.95);">7</div>
<div style="position:absolute;left:-290.7px;width:600px;text-align:center;top:343.50px;height:19px;line-height:19px;white-space:pre;font-family:'Liberation Sans', sans-serif;font-size:14.6px;font-weight:normal;color:#262626;transform:scaleX(0.95);">8</div>
<div style="position:absolute;left:-290.7px;width:600px;text-align:center;top:362.50px;height:19px;line-height:19px;white-space:pre;font-family:'Liberation Sans', sans-serif;font-size:14.6px;font-weight:normal;color:#262626;transform:scaleX(0.95);">9</div>
<div style="position:absolute;left:-290.7px;width:600px;text-align:center;top:381.50px;height:19px;line-height:19px;white-space:pre;font-family:'Liberation Sans', sans-serif;font-size:14.6px;font-weight:normal;color:#262626;transform:scaleX(0.95);">10</div>
<div style="position:absolute;left:-290.7px;width:600px;text-align:center;top:400.00px;height:19px;line-height:19px;white-space:pre;font-family:'Liberation Sans', sans-serif;font-size:14.6px;font-weight:normal;color:#262626;transform:scaleX(0.95);">11</div>
<div style="position:absolute;left:-290.7px;width:600px;text-align:center;top:418.00px;height:19px;line-height:19px;white-space:pre;font-family:'Liberation Sans', sans-serif;font-size:14.6px;font-weight:normal;color:#262626;transform:scaleX(0.95);">12</div>
<div style="position:absolute;left:-290.7px;width:600px;text-align:center;top:436.50px;height:19px;line-height:19px;white-space:pre;font-family:'Liberation Sans', sans-serif;font-size:14.6px;font-weight:normal;color:#262626;transform:scaleX(0.95);">13</div>
<div style="position:absolute;left:-290.7px;width:600px;text-align:center;top:455.00px;height:19px;line-height:19px;white-space:pre;font-family:'Liberation Sans', sans-serif;font-size:14.6px;font-weight:normal;color:#262626;transform:scaleX(0.95);">14</div>
<div style="position:absolute;left:-290.7px;width:600px;text-align:center;top:473.00px;height:19px;line-height:19px;white-space:pre;font-family:'Liberation Sans', sans-serif;font-size:14.6px;font-weight:normal;color:#262626;transform:scaleX(0.95);">15</div>
<div style="position:absolute;left:-290.7px;width:600px;text-align:center;top:491.50px;height:19px;line-height:19px;white-space:pre;font-family:'Liberation Sans', sans-serif;font-size:14.6px;font-weight:normal;color:#262626;transform:scaleX(0.95);">16</div>
<div style="position:absolute;left:-290.7px;width:600px;text-align:center;top:510.50px;height:19px;line-height:19px;white-space:pre;font-family:'Liberation Sans', sans-serif;font-size:14.6px;font-weight:normal;color:#262626;transform:scaleX(0.95);">17</div>
<div style="position:absolute;left:-290.7px;width:600px;text-align:center;top:529.50px;height:19px;line-height:19px;white-space:pre;font-family:'Liberation Sans', sans-serif;font-size:14.6px;font-weight:normal;color:#262626;transform:scaleX(0.95);">18</div>
<div style="position:absolute;left:-290.7px;width:600px;text-align:center;top:548.50px;height:19px;line-height:19px;white-space:pre;font-family:'Liberation Sans', sans-serif;font-size:14.6px;font-weight:normal;color:#262626;transform:scaleX(0.95);">19</div>
<div style="position:absolute;left:-290.7px;width:600px;text-align:center;top:567.00px;height:19px;line-height:19px;white-space:pre;font-family:'Liberation Sans', sans-serif;font-size:14.6px;font-weight:normal;color:#262626;transform:scaleX(0.95);">20</div>
<div style="position:absolute;left:-290.7px;width:600px;text-align:center;top:585.00px;height:19px;line-height:19px;white-space:pre;font-family:'Liberation Sans', sans-serif;font-size:14.6px;font-weight:normal;color:#262626;transform:scaleX(0.95);">21</div>
<div style="position:absolute;left:-290.7px;width:600px;text-align:center;top:603.50px;height:19px;line-height:19px;white-space:pre;font-family:'Liberation Sans', sans-serif;font-size:14.6px;font-weight:normal;color:#262626;transform:scaleX(0.95);">22</div>
<div style="position:absolute;left:-290.7px;width:600px;text-align:center;top:624.50px;height:19px;line-height:19px;white-space:pre;font-family:'Liberation Sans', sans-serif;font-size:14.6px;font-weight:normal;color:#262626;transform:scaleX(0.95);">26</div>
<div style="position:absolute;left:-290.7px;width:600px;text-align:center;top:642.00px;height:19px;line-height:19px;white-space:pre;font-family:'Liberation Sans', sans-serif;font-size:14.6px;font-weight:normal;color:#262626;transform:scaleX(0.95);">27</div>
<div style="position:absolute;left:-290.7px;width:600px;text-align:center;top:660.50px;height:19px;line-height:19px;white-space:pre;font-family:'Liberation Sans', sans-serif;font-size:14.6px;font-weight:normal;color:#262626;transform:scaleX(0.95);">28</div>
<div style="position:absolute;left:-290.7px;width:600px;text-align:center;top:679.00px;height:19px;line-height:19px;white-space:pre;font-family:'Liberation Sans', sans-serif;font-size:14.6px;font-weight:normal;color:#262626;transform:scaleX(0.95);">29</div>
<div style="position:absolute;left:91px;top:269px;width:905px;height:428px;background:#fff;"></div>
<div style="position:absolute;left:1063px;top:269px;width:68px;height:38px;background:#fff;"></div>
<div style="position:absolute;left:91px;top:343px;width:905px;height:19px;background:#ccffcc;"></div>
<div style="position:absolute;left:90px;top:268px;width:906px;height:2px;background:#000;"></div>
<div style="position:absolute;left:563px;top:286px;width:189px;height:2px;background:#000;"></div>
<div style="position:absolute;left:859px;top:286px;width:137px;height:2px;background:#000;"></div>
<div style="position:absolute;left:90px;top:324px;width:906px;height:2px;background:#000;"></div>
<div style="position:absolute;left:90px;top:268px;width:2px;height:58px;background:#000;"></div>
<div style="position:absolute;left:122px;top:268px;width:2px;height:58px;background:#000;"></div>
<div style="position:absolute;left:453px;top:268px;width:2px;height:58px;background:#000;"></div>
<div style="position:absolute;left:503px;top:268px;width:2px;height:58px;background:#000;"></div>
<div style="position:absolute;left:563px;top:268px;width:2px;height:58px;background:#000;"></div>
<div style="position:absolute;left:750px;top:268px;width:2px;height:58px;background:#000;"></div>
<div style="position:absolute;left:796px;top:268px;width:2px;height:58px;background:#000;"></div>
<div style="position:absolute;left:859px;top:268px;width:2px;height:58px;background:#000;"></div>
<div style="position:absolute;left:994px;top:268px;width:2px;height:58px;background:#000;"></div>
<div style="position:absolute;left:626px;top:286px;width:2px;height:40px;background:#000;"></div>
<div style="position:absolute;left:690px;top:286px;width:2px;height:40px;background:#000;"></div>
<div style="position:absolute;left:927px;top:286px;width:2px;height:40px;background:#000;"></div>
<div style="position:absolute;left:1062px;top:268px;width:69px;height:2px;background:#000;"></div>
<div style="position:absolute;left:1062px;top:286px;width:69px;height:2px;background:#000;"></div>
<div style="position:absolute;left:1062px;top:306px;width:69px;height:2px;background:#000;"></div>
<div style="position:absolute;left:1062px;top:268px;width:2px;height:40px;background:#000;"></div>
<div style="position:absolute;left:1129px;top:268px;width:2px;height:40px;background:#000;"></div>
<div style="position:absolute;left:91px;top:343px;width:1108px;height:1px;background:#000;"></div>
<div style="position:absolute;left:996px;top:325px;width:203px;height:1px;background:#000;"></div>
<div style="position:absolute;left:454px;top:325px;width:1px;height:19px;background:#000;"></div>
<div style="position:absolute;left:504px;top:325px;width:1px;height:19px;background:#000;"></div>
<div style="position:absolute;left:564px;top:325px;width:1px;height:19px;background:#000;"></div>
<div style="position:absolute;left:627px;top:325px;width:1px;height:19px;background:#000;"></div>
<div style="position:absolute;left:691px;top:325px;width:1px;height:19px;background:#000;"></div>
<div style="position:absolute;left:751px;top:325px;width:1px;height:19px;background:#000;"></div>
<div style="position:absolute;left:797px;top:325px;width:1px;height:19px;background:#000;"></div>
<div style="position:absolute;left:860px;top:325px;width:1px;height:19px;background:#000;"></div>
<div style="position:absolute;left:928px;top:325px;width:1px;height:19px;background:#000;"></div>
<div style="position:absolute;left:1063px;top:325px;width:1px;height:19px;background:#000;"></div>
<div style="position:absolute;left:1130px;top:325px;width:1px;height:19px;background:#000;"></div>
<div style="position:absolute;left:1198px;top:325px;width:1px;height:19px;background:#000;"></div>
<div style="position:absolute;left:90px;top:324px;width:2px;height:39px;background:#000;"></div>
<div style="position:absolute;left:122px;top:324px;width:2px;height:39px;background:#000;"></div>
<div style="position:absolute;left:90px;top:342px;width:906px;height:2px;background:#000;"></div>
<div style="position:absolute;left:90px;top:361px;width:906px;height:2px;background:#000;"></div>
<div style="position:absolute;left:90px;top:268px;width:2px;height:430px;background:#000;"></div>
<div style="position:absolute;left:123px;top:362px;width:1px;height:168px;background:#000;"></div>
<div style="position:absolute;left:454px;top:362px;width:1px;height:168px;background:#000;"></div>
<div style="position:absolute;left:504px;top:362px;width:1px;height:168px;background:#000;"></div>
<div style="position:absolute;left:564px;top:362px;width:1px;height:168px;background:#000;"></div>
<div style="position:absolute;left:627px;top:362px;width:1px;height:168px;background:#000;"></div>
<div style="position:absolute;left:691px;top:362px;width:1px;height:168px;background:#000;"></div>
<div style="position:absolute;left:751px;top:362px;width:1px;height:168px;background:#000;"></div>
<div style="position:absolute;left:797px;top:362px;width:1px;height:168px;background:#000;"></div>
<div style="position:absolute;left:860px;top:362px;width:1px;height:168px;background:#000;"></div>
<div style="position:absolute;left:928px;top:362px;width:1px;height:168px;background:#000;"></div>
<div style="position:absolute;left:90px;top:528px;width:906px;height:2px;background:#000;"></div>
<div style="position:absolute;left:123px;top:529px;width:1px;height:20px;background:#000;"></div>
<div style="position:absolute;left:454px;top:529px;width:1px;height:20px;background:#000;"></div>
<div style="position:absolute;left:504px;top:529px;width:1px;height:20px;background:#000;"></div>
<div style="position:absolute;left:564px;top:529px;width:1px;height:20px;background:#000;"></div>
<div style="position:absolute;left:627px;top:529px;width:1px;height:20px;background:#000;"></div>
<div style="position:absolute;left:691px;top:529px;width:1px;height:20px;background:#000;"></div>
<div style="position:absolute;left:751px;top:529px;width:1px;height:20px;background:#000;"></div>
<div style="position:absolute;left:797px;top:529px;width:1px;height:20px;background:#000;"></div>
<div style="position:absolute;left:860px;top:529px;width:1px;height:20px;background:#000;"></div>
<div style="position:absolute;left:928px;top:529px;width:1px;height:20px;background:#000;"></div>
<div style="position:absolute;left:90px;top:547px;width:906px;height:2px;background:#000;"></div>
<div style="position:absolute;left:123px;top:548px;width:1px;height:75px;background:#000;"></div>
<div style="position:absolute;left:454px;top:548px;width:1px;height:75px;background:#000;"></div>
<div style="position:absolute;left:504px;top:548px;width:1px;height:75px;background:#000;"></div>
<div style="position:absolute;left:751px;top:548px;width:1px;height:75px;background:#000;"></div>
<div style="position:absolute;left:797px;top:548px;width:1px;height:75px;background:#000;"></div>
<div style="position:absolute;left:928px;top:548px;width:1px;height:75px;background:#000;"></div>
<div style="position:absolute;left:860px;top:585px;width:1px;height:38px;background:#000;"></div>
<div style="position:absolute;left:123px;top:567px;width:873px;height:1px;background:#000;"></div>
<div style="position:absolute;left:504px;top:585px;width:248px;height:1px;background:#000;"></div>
<div style="position:absolute;left:797px;top:585px;width:199px;height:1px;background:#000;"></div>
<div style="position:absolute;left:797px;top:603px;width:132px;height:1px;background:#000;"></div>
<div style="position:absolute;left:90px;top:622px;width:906px;height:3px;background:#000;"></div>
<div style="position:absolute;left:123px;top:625px;width:1px;height:73px;background:#000;"></div>
<div style="position:absolute;left:454px;top:625px;width:1px;height:73px;background:#000;"></div>
<div style="position:absolute;left:504px;top:625px;width:1px;height:73px;background:#000;"></div>
<div style="position:absolute;left:751px;top:625px;width:1px;height:73px;background:#000;"></div>
<div style="position:absolute;left:797px;top:625px;width:1px;height:73px;background:#000;"></div>
<div style="position:absolute;left:928px;top:625px;width:1px;height:73px;background:#000;"></div>
<div style="position:absolute;left:123px;top:642px;width:873px;height:1px;background:#000;"></div>
<div style="position:absolute;left:504px;top:660px;width:248px;height:1px;background:#000;"></div>
<div style="position:absolute;left:797px;top:660px;width:199px;height:1px;background:#000;"></div>
<div style="position:absolute;left:504px;top:679px;width:248px;height:1px;background:#000;"></div>
<div style="position:absolute;left:797px;top:679px;width:132px;height:1px;background:#000;"></div>
<div style="position:absolute;left:564px;top:660px;width:1px;height:38px;background:#000;"></div>
<div style="position:absolute;left:627px;top:660px;width:1px;height:38px;background:#000;"></div>
<div style="position:absolute;left:691px;top:660px;width:1px;height:38px;background:#000;"></div>
<div style="position:absolute;left:860px;top:660px;width:1px;height:38px;background:#000;"></div>
<div style="position:absolute;left:994px;top:269px;width:2px;height:298px;background:#000;"></div>
<div style="position:absolute;left:995px;top:567px;width:1px;height:56px;background:#000;"></div>
<div style="position:absolute;left:994px;top:622px;width:2px;height:75px;background:#000;"></div>
<div style="position:absolute;left:-193.0px;width:600px;text-align:center;top:288.31px;height:20px;line-height:20px;white-space:pre;font-family:'Liberation Serif', serif;font-size:13.9px;font-weight:bold;color:#000;letter-spacing:0.45px;">STT</div>
<div style="position:absolute;left:-11.5px;width:600px;text-align:center;top:288.31px;height:20px;line-height:20px;white-space:pre;font-family:'Liberation Serif', serif;font-size:13.9px;font-weight:bold;color:#000;letter-spacing:0.45px;">NỘI DUNG CÔNG VIỆC.</div>
<div style="position:absolute;left:179.0px;width:600px;text-align:center;top:279.31px;height:20px;line-height:20px;white-space:pre;font-family:'Liberation Serif', serif;font-size:13.9px;font-weight:bold;color:#000;letter-spacing:0.45px;">ĐƠN</div>
<div style="position:absolute;left:179.0px;width:600px;text-align:center;top:298.31px;height:20px;line-height:20px;white-space:pre;font-family:'Liberation Serif', serif;font-size:13.9px;font-weight:bold;color:#000;letter-spacing:0.45px;">VỊ</div>
<div style="position:absolute;left:234.0px;width:600px;text-align:center;top:270.31px;height:20px;line-height:20px;white-space:pre;font-family:'Liberation Serif', serif;font-size:13.9px;font-weight:bold;color:#000;letter-spacing:0.45px;">SỐ CK</div>
<div style="position:absolute;left:234.0px;width:600px;text-align:center;top:288.31px;height:20px;line-height:20px;white-space:pre;font-family:'Liberation Serif', serif;font-size:13.9px;font-weight:bold;color:#000;letter-spacing:0.45px;">GIỐNG</div>
<div style="position:absolute;left:234.0px;width:600px;text-align:center;top:307.31px;height:20px;line-height:20px;white-space:pre;font-family:'Liberation Serif', serif;font-size:13.9px;font-weight:bold;color:#000;letter-spacing:0.45px;">NHAU</div>
<div style="position:absolute;left:357.5px;width:600px;text-align:center;top:268.31px;height:20px;line-height:20px;white-space:pre;font-family:'Liberation Serif', serif;font-size:13.9px;font-weight:bold;color:#000;letter-spacing:0.45px;">KÍCH THƯỚC</div>
<div style="position:absolute;left:295.5px;width:600px;text-align:center;top:297.31px;height:20px;line-height:20px;white-space:pre;font-family:'Liberation Serif', serif;font-size:13.9px;font-weight:bold;color:#000;letter-spacing:0.45px;">DÀI</div>
<div style="position:absolute;left:359.0px;width:600px;text-align:center;top:297.31px;height:20px;line-height:20px;white-space:pre;font-family:'Liberation Serif', serif;font-size:13.9px;font-weight:bold;color:#000;letter-spacing:0.45px;">RỘNG</div>
<div style="position:absolute;left:421.0px;width:600px;text-align:center;top:297.31px;height:20px;line-height:20px;white-space:pre;font-family:'Liberation Serif', serif;font-size:13.9px;font-weight:bold;color:#000;letter-spacing:0.45px;">CAO</div>
<div style="position:absolute;left:474.0px;width:600px;text-align:center;top:279.31px;height:20px;line-height:20px;white-space:pre;font-family:'Liberation Serif', serif;font-size:13.9px;font-weight:bold;color:#000;letter-spacing:0.45px;">SỐ</div>
<div style="position:absolute;left:474.0px;width:600px;text-align:center;top:298.31px;height:20px;line-height:20px;white-space:pre;font-family:'Liberation Serif', serif;font-size:13.9px;font-weight:bold;color:#000;letter-spacing:0.45px;">PHỤ</div>
<div style="position:absolute;left:528.5px;width:600px;text-align:center;top:270.31px;height:20px;line-height:20px;white-space:pre;font-family:'Liberation Serif', serif;font-size:13.9px;font-weight:bold;color:#000;letter-spacing:0.45px;">KHỐI</div>
<div style="position:absolute;left:528.5px;width:600px;text-align:center;top:288.31px;height:20px;line-height:20px;white-space:pre;font-family:'Liberation Serif', serif;font-size:13.9px;font-weight:bold;color:#000;letter-spacing:0.45px;">LƯỢNG</div>
<div style="position:absolute;left:528.5px;width:600px;text-align:center;top:307.31px;height:20px;line-height:20px;white-space:pre;font-family:'Liberation Serif', serif;font-size:13.9px;font-weight:bold;color:#000;letter-spacing:0.45px;">1CK</div>
<div style="position:absolute;left:627.5px;width:600px;text-align:center;top:268.31px;height:20px;line-height:20px;white-space:pre;font-family:'Liberation Serif', serif;font-size:13.9px;font-weight:bold;color:#000;letter-spacing:0.45px;">KHỐI LƯỢNG</div>
<div style="position:absolute;left:594.0px;width:600px;text-align:center;top:288.31px;height:20px;line-height:20px;white-space:pre;font-family:'Liberation Serif', serif;font-size:13.9px;font-weight:bold;color:#000;letter-spacing:0.45px;">TỪNG</div>
<div style="position:absolute;left:594.0px;width:600px;text-align:center;top:307.31px;height:20px;line-height:20px;white-space:pre;font-family:'Liberation Serif', serif;font-size:13.9px;font-weight:bold;color:#000;letter-spacing:0.45px;">PHẦN</div>
<div style="position:absolute;left:661.5px;width:600px;text-align:center;top:288.31px;height:20px;line-height:20px;white-space:pre;font-family:'Liberation Serif', serif;font-size:13.9px;font-weight:bold;color:#000;letter-spacing:0.45px;">TOÀN</div>
<div style="position:absolute;left:661.5px;width:600px;text-align:center;top:307.31px;height:20px;line-height:20px;white-space:pre;font-family:'Liberation Serif', serif;font-size:13.9px;font-weight:bold;color:#000;letter-spacing:0.45px;">PHẦN</div>
<div style="position:absolute;left:796.5px;width:600px;text-align:center;top:268.24px;height:20px;line-height:20px;white-space:pre;font-family:'Liberation Serif', serif;font-size:14.1px;font-weight:normal;color:#000;">N</div>
<div style="position:absolute;left:796.5px;width:600px;text-align:center;top:287.24px;height:20px;line-height:20px;white-space:pre;font-family:'Liberation Serif', serif;font-size:14.1px;font-weight:normal;color:#000;">18</div>
<div style="position:absolute;left:-193.0px;width:600px;text-align:center;top:326.24px;height:20px;line-height:20px;white-space:pre;font-family:'Liberation Serif', serif;font-size:14.1px;font-weight:normal;color:#000;">1</div>
<div style="position:absolute;left:-11.5px;width:600px;text-align:center;top:326.24px;height:20px;line-height:20px;white-space:pre;font-family:'Liberation Serif', serif;font-size:14.1px;font-weight:normal;color:#000;">2</div>
<div style="position:absolute;left:179.0px;width:600px;text-align:center;top:326.24px;height:20px;line-height:20px;white-space:pre;font-family:'Liberation Serif', serif;font-size:14.1px;font-weight:normal;color:#000;">3</div>
<div style="position:absolute;left:234.0px;width:600px;text-align:center;top:326.24px;height:20px;line-height:20px;white-space:pre;font-family:'Liberation Serif', serif;font-size:14.1px;font-weight:normal;color:#000;">4</div>
<div style="position:absolute;left:295.5px;width:600px;text-align:center;top:326.24px;height:20px;line-height:20px;white-space:pre;font-family:'Liberation Serif', serif;font-size:14.1px;font-weight:normal;color:#000;">5</div>
<div style="position:absolute;left:359.0px;width:600px;text-align:center;top:326.24px;height:20px;line-height:20px;white-space:pre;font-family:'Liberation Serif', serif;font-size:14.1px;font-weight:normal;color:#000;">6</div>
<div style="position:absolute;left:421.0px;width:600px;text-align:center;top:326.24px;height:20px;line-height:20px;white-space:pre;font-family:'Liberation Serif', serif;font-size:14.1px;font-weight:normal;color:#000;">7</div>
<div style="position:absolute;left:474.0px;width:600px;text-align:center;top:326.24px;height:20px;line-height:20px;white-space:pre;font-family:'Liberation Serif', serif;font-size:14.1px;font-weight:normal;color:#000;">8</div>
<div style="position:absolute;left:594.0px;width:600px;text-align:center;top:326.31px;height:20px;line-height:20px;white-space:pre;font-family:'Liberation Serif', serif;font-size:13.9px;font-weight:bold;color:#000;letter-spacing:0.45px;">9</div>
<div style="position:absolute;left:661.5px;width:600px;text-align:center;top:326.24px;height:20px;line-height:20px;white-space:pre;font-family:'Liberation Serif', serif;font-size:14.1px;font-weight:normal;color:#000;">10</div>
<div style="position:absolute;left:-193.0px;width:600px;text-align:center;top:344.31px;height:20px;line-height:20px;white-space:pre;font-family:'Liberation Serif', serif;font-size:13.9px;font-weight:bold;color:#000;letter-spacing:0.45px;">I</div>
<div style="position:absolute;left:259.0px;width:600px;text-align:center;top:344.31px;height:20px;line-height:20px;white-space:pre;font-family:'Liberation Serif', serif;font-size:13.9px;font-weight:bold;color:#000;letter-spacing:0.45px;">PHẦN MÓNG</div>
<div style="position:absolute;left:-11.5px;width:600px;text-align:center;top:363.31px;height:20px;line-height:20px;white-space:pre;font-family:'Liberation Serif', serif;font-size:13.9px;font-weight:bold;color:#000;letter-spacing:0.45px;">Đào đất bằng máy</div>
<div style="position:absolute;left:-11.5px;width:600px;text-align:center;top:382.24px;height:20px;line-height:20px;white-space:pre;font-family:'Liberation Serif', serif;font-size:14.1px;font-weight:normal;color:#000;">Đào toàn bộ hố móng</div>
<div style="position:absolute;left:125px;top:400.24px;height:20px;line-height:20px;white-space:pre;font-family:'Liberation Serif', serif;font-size:14.1px;font-weight:normal;color:#000;">a = 18.L3+b1+2btc = 18. 3,6+ 1,6+ 2.0,5 =67,4 m</div>
<div style="position:absolute;left:125px;top:418.24px;height:20px;line-height:20px;white-space:pre;font-family:'Liberation Serif', serif;font-size:14.1px;font-weight:normal;color:#000;">b = 2.(L1+L2) + 2.a1 + 2.btc = 2.(4,5 + 3,3)+2.0,9 +0,2+</div>
<div style="position:absolute;left:125px;top:437.24px;height:20px;line-height:20px;white-space:pre;font-family:'Liberation Serif', serif;font-size:14.1px;font-weight:normal;color:#000;">2.0,5= 18,4 m</div>
<div style="position:absolute;left:125px;top:455.24px;height:20px;line-height:20px;white-space:pre;font-family:'Liberation Serif', serif;font-size:14.1px;font-weight:normal;color:#000;">c = a + 2. B&#x27; = 67,4 + 2.0,275 = 67,95 m</div>
<div style="position:absolute;left:125px;top:474.24px;height:20px;line-height:20px;white-space:pre;font-family:'Liberation Serif', serif;font-size:14.1px;font-weight:normal;color:#000;">d = b + 2B&#x27; = 18,4 + 2.0,275 = 18,95  m</div>
<div style="position:absolute;left:125px;top:492.24px;height:20px;line-height:20px;white-space:pre;font-family:'Liberation Serif', serif;font-size:14.1px;font-weight:normal;color:#000;">h = 1,1 m</div>
<div style="position:absolute;left:-11.5px;width:600px;text-align:center;top:510.24px;height:20px;line-height:20px;white-space:pre;font-family:'Liberation Serif', serif;font-size:14.1px;font-weight:normal;color:#000;">V = h/6*(a*b+c*d+(a+c)*(b+d)) m3</div>
<div style="position:absolute;left:-193.0px;width:600px;text-align:center;top:437.24px;height:20px;line-height:20px;white-space:pre;font-family:'Liberation Serif', serif;font-size:14.1px;font-weight:normal;color:#000;">1</div>
<div style="position:absolute;left:179.0px;width:600px;text-align:center;top:437.24px;height:20px;line-height:20px;white-space:pre;font-family:'Liberation Serif', serif;font-size:14.1px;font-weight:normal;color:#000;">m3</div>
<div style="position:absolute;left:234.0px;width:600px;text-align:center;top:437.24px;height:20px;line-height:20px;white-space:pre;font-family:'Liberation Serif', serif;font-size:14.1px;font-weight:normal;color:#000;">1</div>
<div style="position:absolute;left:295.5px;width:600px;text-align:center;top:418.24px;height:20px;line-height:20px;white-space:pre;font-family:'Liberation Serif', serif;font-size:14.1px;font-weight:normal;color:#000;">67.4</div>
<div style="position:absolute;left:295.5px;width:600px;text-align:center;top:437.24px;height:20px;line-height:20px;white-space:pre;font-family:'Liberation Serif', serif;font-size:14.1px;font-weight:normal;color:#000;">67.95</div>
<div style="position:absolute;left:359.0px;width:600px;text-align:center;top:418.24px;height:20px;line-height:20px;white-space:pre;font-family:'Liberation Serif', serif;font-size:14.1px;font-weight:normal;color:#000;">18.4</div>
<div style="position:absolute;left:359.0px;width:600px;text-align:center;top:437.24px;height:20px;line-height:20px;white-space:pre;font-family:'Liberation Serif', serif;font-size:14.1px;font-weight:normal;color:#000;">18.95</div>
<div style="position:absolute;left:421.0px;width:600px;text-align:center;top:418.24px;height:20px;line-height:20px;white-space:pre;font-family:'Liberation Serif', serif;font-size:14.1px;font-weight:normal;color:#000;">1.1</div>
<div style="position:absolute;left:474.0px;width:600px;text-align:center;top:437.24px;height:20px;line-height:20px;white-space:pre;font-family:'Liberation Serif', serif;font-size:14.1px;font-weight:normal;color:#000;">95%</div>
<div style="position:absolute;left:528.5px;width:600px;text-align:center;top:437.24px;height:20px;line-height:20px;white-space:pre;font-family:'Liberation Serif', serif;font-size:14.1px;font-weight:normal;color:#000;">1390.24</div>
<div style="position:absolute;left:594.0px;width:600px;text-align:center;top:437.31px;height:20px;line-height:20px;white-space:pre;font-family:'Liberation Serif', serif;font-size:13.9px;font-weight:bold;color:#000;letter-spacing:0.45px;">1390.24</div>
<div style="position:absolute;left:661.5px;width:600px;text-align:center;top:437.31px;height:20px;line-height:20px;white-space:pre;font-family:'Liberation Serif', serif;font-size:13.9px;font-weight:bold;color:#000;letter-spacing:0.45px;">1320.73</div>
<div style="position:absolute;left:-193.0px;width:600px;text-align:center;top:529.74px;height:20px;line-height:20px;white-space:pre;font-family:'Liberation Serif', serif;font-size:14.1px;font-weight:normal;color:#000;">2</div>
<div style="position:absolute;left:-11.5px;width:600px;text-align:center;top:529.81px;height:20px;line-height:20px;white-space:pre;font-family:'Liberation Serif', serif;font-size:13.9px;font-weight:bold;color:#000;letter-spacing:0.45px;">Sửa chữa bằng  thủ công</div>
<div style="position:absolute;left:179.0px;width:600px;text-align:center;top:529.74px;height:20px;line-height:20px;white-space:pre;font-family:'Liberation Serif', serif;font-size:14.1px;font-weight:normal;color:#000;">m3</div>
<div style="position:absolute;left:234.0px;width:600px;text-align:center;top:529.74px;height:20px;line-height:20px;white-space:pre;font-family:'Liberation Serif', serif;font-size:14.1px;font-weight:normal;color:#000;">1</div>
<div style="position:absolute;left:474.0px;width:600px;text-align:center;top:529.74px;height:20px;line-height:20px;white-space:pre;font-family:'Liberation Serif', serif;font-size:14.1px;font-weight:normal;color:#000;">5%</div>
<div style="position:absolute;left:661.5px;width:600px;text-align:center;top:529.81px;height:20px;line-height:20px;white-space:pre;font-family:'Liberation Serif', serif;font-size:13.9px;font-weight:bold;color:#000;letter-spacing:0.45px;">69.51</div>
<div style="position:absolute;left:-193.0px;width:600px;text-align:center;top:577.24px;height:20px;line-height:20px;white-space:pre;font-family:'Liberation Serif', serif;font-size:14.1px;font-weight:normal;color:#000;">3</div>
<div style="position:absolute;left:179.0px;width:600px;text-align:center;top:577.24px;height:20px;line-height:20px;white-space:pre;font-family:'Liberation Serif', serif;font-size:14.1px;font-weight:normal;color:#000;">m3</div>
<div style="position:absolute;left:-11.5px;width:600px;text-align:center;top:549.31px;height:20px;line-height:20px;white-space:pre;font-family:'Liberation Serif', serif;font-size:13.9px;font-weight:bold;color:#000;letter-spacing:0.45px;">Đổ bê tông lót</div>
<div style="position:absolute;left:661.5px;width:600px;text-align:center;top:549.31px;height:20px;line-height:20px;white-space:pre;font-family:'Liberation Serif', serif;font-size:13.9px;font-weight:bold;color:#000;letter-spacing:0.45px;">38.76</div>
<div style="position:absolute;left:-11.5px;width:600px;text-align:center;top:568.31px;height:20px;line-height:20px;white-space:pre;font-family:'Liberation Serif', serif;font-size:13.9px;font-weight:bold;color:#000;letter-spacing:0.45px;">Móng</div>
<div style="position:absolute;left:-11.5px;width:600px;text-align:center;top:586.24px;height:20px;line-height:20px;white-space:pre;font-family:'Liberation Serif', serif;font-size:14.1px;font-weight:normal;color:#000;">M1</div>
<div style="position:absolute;left:234.0px;width:600px;text-align:center;top:586.24px;height:20px;line-height:20px;white-space:pre;font-family:'Liberation Serif', serif;font-size:14.1px;font-weight:normal;color:#000;">38</div>
<div style="position:absolute;left:295.5px;width:600px;text-align:center;top:586.24px;height:20px;line-height:20px;white-space:pre;font-family:'Liberation Serif', serif;font-size:14.1px;font-weight:normal;color:#000;">5.2</div>
<div style="position:absolute;left:359.0px;width:600px;text-align:center;top:586.24px;height:20px;line-height:20px;white-space:pre;font-family:'Liberation Serif', serif;font-size:14.1px;font-weight:normal;color:#000;">1.6</div>
<div style="position:absolute;left:421.0px;width:600px;text-align:center;top:586.24px;height:20px;line-height:20px;white-space:pre;font-family:'Liberation Serif', serif;font-size:14.1px;font-weight:normal;color:#000;">0.1</div>
<div style="position:absolute;left:528.5px;width:600px;text-align:center;top:586.24px;height:20px;line-height:20px;white-space:pre;font-family:'Liberation Serif', serif;font-size:14.1px;font-weight:normal;color:#000;">0.83</div>
<div style="position:absolute;left:594.0px;width:600px;text-align:center;top:586.31px;height:20px;line-height:20px;white-space:pre;font-family:'Liberation Serif', serif;font-size:13.9px;font-weight:bold;color:#000;letter-spacing:0.45px;">31.54</div>
<div style="position:absolute;left:-11.5px;width:600px;text-align:center;top:604.24px;height:20px;line-height:20px;white-space:pre;font-family:'Liberation Serif', serif;font-size:14.1px;font-weight:normal;color:#000;">M2</div>
<div style="position:absolute;left:234.0px;width:600px;text-align:center;top:604.24px;height:20px;line-height:20px;white-space:pre;font-family:'Liberation Serif', serif;font-size:14.1px;font-weight:normal;color:#000;">19</div>
<div style="position:absolute;left:295.5px;width:600px;text-align:center;top:604.24px;height:20px;line-height:20px;white-space:pre;font-family:'Liberation Serif', serif;font-size:14.1px;font-weight:normal;color:#000;">2.4</div>
<div style="position:absolute;left:359.0px;width:600px;text-align:center;top:604.24px;height:20px;line-height:20px;white-space:pre;font-family:'Liberation Serif', serif;font-size:14.1px;font-weight:normal;color:#000;">1.6</div>
<div style="position:absolute;left:421.0px;width:600px;text-align:center;top:604.24px;height:20px;line-height:20px;white-space:pre;font-family:'Liberation Serif', serif;font-size:14.1px;font-weight:normal;color:#000;">0.1</div>
<div style="position:absolute;left:528.5px;width:600px;text-align:center;top:604.24px;height:20px;line-height:20px;white-space:pre;font-family:'Liberation Serif', serif;font-size:14.1px;font-weight:normal;color:#000;">0.38</div>
<div style="position:absolute;left:594.0px;width:600px;text-align:center;top:604.31px;height:20px;line-height:20px;white-space:pre;font-family:'Liberation Serif', serif;font-size:13.9px;font-weight:bold;color:#000;letter-spacing:0.45px;">7.22</div>
<div style="position:absolute;left:-11.5px;width:600px;text-align:center;top:624.81px;height:20px;line-height:20px;white-space:pre;font-family:'Liberation Serif', serif;font-size:13.9px;font-weight:bold;color:#000;letter-spacing:0.45px;">Bê tông móng</div>
<div style="position:absolute;left:661.5px;width:600px;text-align:center;top:624.81px;height:20px;line-height:20px;white-space:pre;font-family:'Liberation Serif', serif;font-size:13.9px;font-weight:bold;color:#000;letter-spacing:0.45px;">128.71</div>
<div style="position:absolute;left:-11.5px;width:600px;text-align:center;top:642.81px;height:20px;line-height:20px;white-space:pre;font-family:'Liberation Serif', serif;font-size:13.9px;font-weight:bold;color:#000;letter-spacing:0.45px;">Phần đế</div>
<div style="position:absolute;left:661.5px;width:600px;text-align:center;top:642.81px;height:20px;line-height:20px;white-space:pre;font-family:'Liberation Serif', serif;font-size:13.9px;font-weight:bold;color:#000;letter-spacing:0.45px;">77.71</div>
<div style="position:absolute;left:796.5px;width:600px;text-align:center;top:642.74px;height:20px;line-height:20px;white-space:pre;font-family:'Liberation Serif', serif;font-size:14.1px;font-weight:normal;color:#000;">m1</div>
<div style="position:absolute;left:-11.5px;width:600px;text-align:center;top:661.24px;height:20px;line-height:20px;white-space:pre;font-family:'Liberation Serif', serif;font-size:14.1px;font-weight:normal;color:#000;">M1</div>
<div style="position:absolute;left:234.0px;width:600px;text-align:center;top:661.24px;height:20px;line-height:20px;white-space:pre;font-family:'Liberation Serif', serif;font-size:14.1px;font-weight:normal;color:#000;">38</div>
<div style="position:absolute;left:295.5px;width:600px;text-align:center;top:661.24px;height:20px;line-height:20px;white-space:pre;font-family:'Liberation Serif', serif;font-size:14.1px;font-weight:normal;color:#000;">5.2</div>
<div style="position:absolute;left:359.0px;width:600px;text-align:center;top:661.24px;height:20px;line-height:20px;white-space:pre;font-family:'Liberation Serif', serif;font-size:14.1px;font-weight:normal;color:#000;">1.6</div>
<div style="position:absolute;left:421.0px;width:600px;text-align:center;top:661.24px;height:20px;line-height:20px;white-space:pre;font-family:'Liberation Serif', serif;font-size:14.1px;font-weight:normal;color:#000;">0.2</div>
<div style="position:absolute;left:528.5px;width:600px;text-align:center;top:661.24px;height:20px;line-height:20px;white-space:pre;font-family:'Liberation Serif', serif;font-size:14.1px;font-weight:normal;color:#000;">1.66</div>
<div style="position:absolute;left:594.0px;width:600px;text-align:center;top:661.31px;height:20px;line-height:20px;white-space:pre;font-family:'Liberation Serif', serif;font-size:13.9px;font-weight:bold;color:#000;letter-spacing:0.45px;">63.08</div>
<div style="position:absolute;left:-11.5px;width:600px;text-align:center;top:679.74px;height:20px;line-height:20px;white-space:pre;font-family:'Liberation Serif', serif;font-size:14.1px;font-weight:normal;color:#000;">M2</div>
<div style="position:absolute;left:234.0px;width:600px;text-align:center;top:679.74px;height:20px;line-height:20px;white-space:pre;font-family:'Liberation Serif', serif;font-size:14.1px;font-weight:normal;color:#000;">19</div>
<div style="position:absolute;left:295.5px;width:600px;text-align:center;top:679.74px;height:20px;line-height:20px;white-space:pre;font-family:'Liberation Serif', serif;font-size:14.1px;font-weight:normal;color:#000;">2.4</div>
<div style="position:absolute;left:359.0px;width:600px;text-align:center;top:679.74px;height:20px;line-height:20px;white-space:pre;font-family:'Liberation Serif', serif;font-size:14.1px;font-weight:normal;color:#000;">1.6</div>
<div style="position:absolute;left:421.0px;width:600px;text-align:center;top:679.74px;height:20px;line-height:20px;white-space:pre;font-family:'Liberation Serif', serif;font-size:14.1px;font-weight:normal;color:#000;">0.2</div>
<div style="position:absolute;left:528.5px;width:600px;text-align:center;top:679.74px;height:20px;line-height:20px;white-space:pre;font-family:'Liberation Serif', serif;font-size:14.1px;font-weight:normal;color:#000;">0.77</div>
<div style="position:absolute;left:594.0px;width:600px;text-align:center;top:679.81px;height:20px;line-height:20px;white-space:pre;font-family:'Liberation Serif', serif;font-size:13.9px;font-weight:bold;color:#000;letter-spacing:0.45px;">14.63</div>
<div style="position:absolute;left:796.5px;width:600px;text-align:center;top:661.24px;height:20px;line-height:20px;white-space:pre;font-family:'Liberation Serif', serif;font-size:14.1px;font-weight:normal;color:#000;">2.83</div>
<div style="position:absolute;left:864.0px;width:600px;text-align:center;top:661.24px;height:20px;line-height:20px;white-space:pre;font-family:'Liberation Serif', serif;font-size:14.1px;font-weight:normal;color:#000;">1.11</div>
<svg style="position:absolute;left:343px;top:441px;" width="110" height="76" viewBox="0 0 110 76"><rect x="0" y="0" width="110" height="76" fill="#fff"/><g fill="none" stroke="#8c8c8c" stroke-width="1.15"><path d="M3.5 11.5H78.5L105 34H30z"/><path d="M3.5 11.5L22.8 49.5L39 63.5H85L105 34"/><path d="M30 34L39 63.5"/></g><g fill="none" stroke="#bdbdbd" stroke-width="0.8" stroke-dasharray="1.6 1.6"><path d="M4 15H82M24 30H97M23.5 49.5H68M23.5 15V49.5M39 30V63M68 15V49.5L85 63.5M85 30V63.5M68 15L97 30"/></g><path d="M53.5 23V56" stroke="#8a8a8a" stroke-width="0.8"/><path d="M51.5 26l2-3 2 3M51.5 53l2 3 2-3" fill="none" stroke="#8a8a8a" stroke-width="0.8"/><g font-family="Liberation Serif" font-size="5" fill="#999"><text x="44" y="8">c</text><text x="92" y="21">d</text><text x="27" y="60">b</text><text x="60" y="70">a</text><text x="55" y="40">h</text></g></svg>
<div style="position:absolute;left:383.5px;width:600px;text-align:center;top:565.80px;height:28px;line-height:28px;white-space:pre;font-family:'Liberation Sans', sans-serif;font-size:21.8px;font-weight:normal;color:rgba(212,212,212,0.93);-webkit-text-stroke:0.5px rgba(130,130,130,0.8);text-shadow:0.8px 0.8px 0 rgba(110,110,110,0.6);">BanVeNhaDep.vn</div>
<div style="position:absolute;left:300.5px;width:600px;text-align:center;top:648.30px;height:29px;line-height:29px;white-space:pre;font-family:'Liberation Sans', sans-serif;font-size:22.4px;font-weight:normal;color:rgba(212,212,212,0.93);-webkit-text-stroke:0.5px rgba(130,130,130,0.8);text-shadow:0.8px 0.8px 0 rgba(110,110,110,0.6);">Bản quyền © BanVeNhaDep.vn</div>
<svg style="position:absolute;left:1070px;top:5px;" width="130" height="60" viewBox="0 0 130 60"><path d="M9.75 56.3 V28 Q9.75 26 12 26 H42 L53 14 L52 11 L57 6.5 L60 6.5 L67 13 L84.5 30 V35.75 H113 Q119 35.75 119 43 V50 Q119 56.3 112 56.3 Z" fill="#fff" stroke="#fff" stroke-width="2.5" stroke-linejoin="round"/><path d="M43.9 50.7 V31.7 L56.5 17.5 L55.5 12.3 L59 9.2 L65.2 15.4 L61.7 18.9 L47.8 34 V50.7 Z" fill="#35c596"/><path d="M49.3 51 V34 L66.4 17 L80.7 31.2 V51 Z" fill="#4b4b50"/><path d="M53.6 47.2 V36.3 L65.5 24.3 L71 29.6 V47.2 Z" fill="#fff"/><path d="M66.6 21 L77 31.2 V51.5" fill="none" stroke="#fff" stroke-width="1.3"/><text x="12" y="35.8" font-family="Liberation Sans" font-weight="bold" font-size="7" textLength="28.5" lengthAdjust="spacingAndGlyphs" fill="#3a3a3a">BẢN VẼ</text><text x="11.8" y="51" font-family="Liberation Sans" font-weight="bold" font-size="16.5" textLength="30" lengthAdjust="spacingAndGlyphs" fill="#2bbf9a">NH</text><text x="83.5" y="51" font-family="Liberation Sans" font-size="16" textLength="33.5" lengthAdjust="spacingAndGlyphs" fill="#444">ĐẸP</text><path d="M12 54.2 h96" stroke="#5fd1c2" stroke-width="1.3"/></svg>
</body></html>
